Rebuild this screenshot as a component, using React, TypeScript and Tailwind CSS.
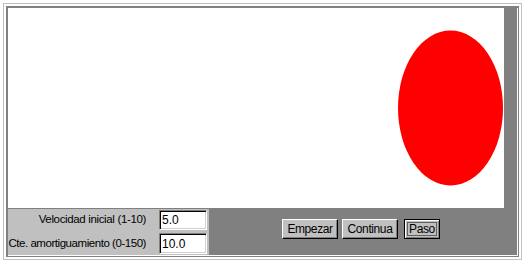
import React from 'react';

const font = { fontFamily: '"Liberation Sans", Arial, sans-serif' };

const Field: React.FC<{ value: string; className?: string }> = ({ value, className }) => (
  <input
    type="text"
    defaultValue={value}
    className={`w-[48px] shrink-0 bg-white text-black text-[12px] pl-[2px] outline-none border border-t-[#808080] border-l-[#808080] border-b-white border-r-white shadow-[inset_1px_1px_0_#000,inset_-1px_-1px_0_#d4d0c8] ${className ?? ''}`}
    style={font}
  />
);

const Button: React.FC<{ label: string; width: string; focused?: boolean }> = ({ label, width, focused }) => (
  <button
    className={`${width} h-[20px] bg-[#c0c0c0] text-black text-[12px] tracking-[-0.4px] whitespace-nowrap flex items-center justify-center ${
      focused
        ? 'border border-black shadow-[inset_1px_1px_0_#fff,inset_-1px_-1px_0_#808080]'
        : 'border border-t-white border-l-white border-b-black border-r-black shadow-[inset_-1px_-1px_0_#808080]'
    }`}
    style={font}
  >
    {focused ? (
      <span className="border border-[#606060] px-[1px] leading-[12px] h-[14px] flex items-center">{label}</span>
    ) : (
      label
    )}
  </button>
);

export default function App() {
  return (
    <div className="w-[526px] h-[263px] bg-white pl-[3px] pt-[3px] pr-[4px] pb-[3px]" style={font}>
      <div className="border border-[#c0c0c0] p-[2px] h-full">
        <div className="border-t-2 border-l-2 border-r border-b border-[#808080] pr-[1px] pb-[1px] bg-white h-full">
          <div className="flex flex-col bg-[#808080] w-[509px] h-[247px]">
            {/* drawing area */}
            <div className="flex h-[200px]">
              <svg width="496" height="200" className="bg-white block">
                <ellipse cx="442.5" cy="100" rx="52.5" ry="77.5" fill="#ff0000" />
              </svg>
              <div className="flex-1 bg-[#808080]" />
            </div>
            {/* controls */}
            <div className="flex flex-1 pt-[1px]">
              <div className="w-[201px] bg-[#c0c0c0] pt-[1px] pr-[2px] flex flex-col gap-[3px]">
                <div className="flex items-center justify-end h-[20px] gap-[13px]">
                  <span className="text-[11.5px] text-black tracking-[-0.35px] whitespace-nowrap">Velocidad inicial (1-10)</span>
                  <Field value="5.0" className="h-[20px]" />
                </div>
                <div className="flex items-center justify-end h-[21px] gap-[13px]">
                  <span className="text-[11.5px] text-black tracking-[-0.45px] whitespace-nowrap">Cte. amortiguamiento (0-150)</span>
                  <Field value="10.0" className="h-[21px]" />
                </div>
              </div>
              <div className="flex-1 flex items-start pt-[10px] pl-[73px] gap-[4px]">
                <Button label="Empezar" width="w-[56px]" />
                <Button label="Continua" width="w-[56px]" />
                <Button label="Paso" width="w-[36px] ml-[2px]" focused />
              </div>
            </div>
          </div>
        </div>
      </div>
    </div>
  );
}
